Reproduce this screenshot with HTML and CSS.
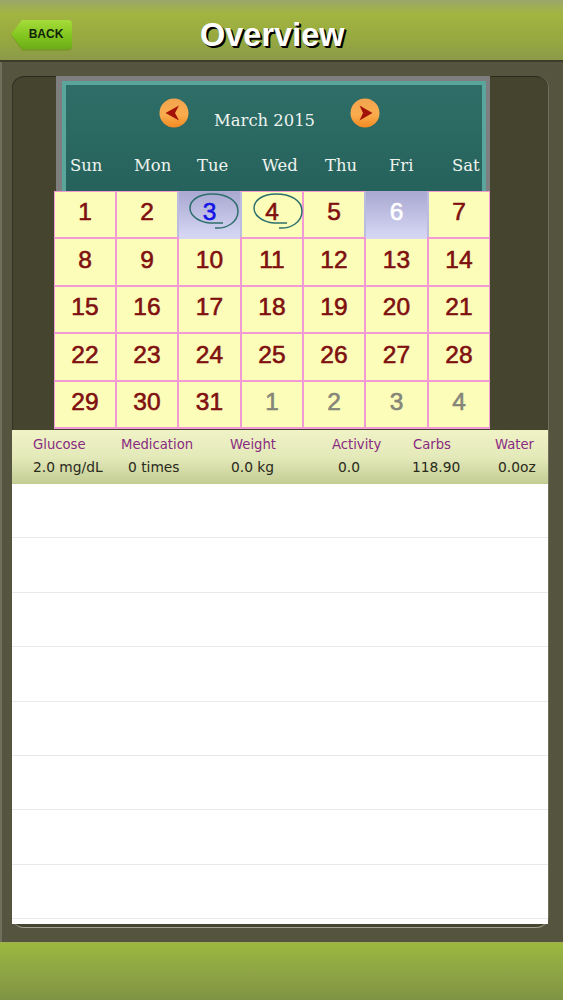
FILE: index.html
```html
<!DOCTYPE html>
<html lang="en">
<head>
<meta charset="utf-8">
<title>Overview</title>
<link rel="stylesheet" href="styles.css">
</head>
<body>
<div class="page">
  <header class="topbar">
    <a class="back">
      <svg class="back-shape" width="64" height="33" viewBox="0 0 64 33"><defs><linearGradient id="bk" x1="0" y1="0" x2="0" y2="1"><stop offset="0" stop-color="#a6dc3a"/><stop offset=".6" stop-color="#7fc31e"/><stop offset="1" stop-color="#6cac18"/></linearGradient></defs><path d="M1 15 L12 1 H58 Q62 1 62 5 V27 Q62 31 58 31 H12 Z" fill="#7d9a2c" transform="translate(0 1)"/><path d="M1 15 L12 1 H58 Q62 1 62 5 V26 Q62 30 58 30 H12 Z" fill="url(#bk)"/></svg>
      <span class="back-label">BACK</span>
    </a>
    <h1 class="title">Overview</h1>
  </header>
  <main class="stage">
    <section class="panel">
      <div class="calendar">
        <div class="cal-head">
          <div class="cal-inner">
            <div class="month-nav">
              <svg class="arrow" width="30" height="30" viewBox="0 0 30 30"><defs><linearGradient id="ar" x1="0" y1="0" x2="0" y2="1"><stop offset="0" stop-color="#f2a44e"/><stop offset=".55" stop-color="#f9ad4e"/><stop offset="1" stop-color="#f58a22"/></linearGradient></defs><circle cx="15" cy="15" r="14.5" fill="url(#ar)"/><path d="M6.5 15 L20 7.5 L16 15 L20 22.5 Z" fill="#a31208"/></svg>
              <span class="month">March 2015</span>
              <svg class="arrow" width="30" height="30" viewBox="0 0 30 30"><circle cx="15" cy="15" r="14.5" fill="url(#ar)"/><path d="M22.5 15 L9.5 7.5 L13 15 L9.5 22.5 Z" fill="#a31208"/></svg>
            </div>
            <div class="weekdays"><span>Sun</span><span>Mon</span><span>Tue</span><span>Wed</span><span>Thu</span><span>Fri</span><span>Sat</span></div>
          </div>
        </div>
        <div class="grid">
          <div class="cell">1</div><div class="cell">2</div>
          <div class="cell marked-day selected"><span class="blue">3</span><svg class="ring" width="56" height="42" viewBox="0 0 56 42"><path d="M30 37 C42 38 53 31 53 20 C53 9 41 3 27 3 C14 3 5 9 5 17 C5 25 14 31 25 32 H38" fill="none" stroke="#2d6f6c" stroke-width="1.5"/></svg></div>
          <div class="cell marked-day">4<svg class="ring" width="56" height="42" viewBox="0 0 56 42"><path d="M30 37 C42 38 53 31 53 20 C53 9 41 3 27 3 C14 3 5 9 5 17 C5 25 14 31 25 32 H38" fill="none" stroke="#2d6f6c" stroke-width="1.5"/></svg></div>
          <div class="cell">5</div><div class="cell today">6</div><div class="cell">7</div>
          <div class="cell">8</div><div class="cell">9</div><div class="cell">10</div><div class="cell">11</div><div class="cell">12</div><div class="cell">13</div><div class="cell">14</div>
          <div class="cell">15</div><div class="cell">16</div><div class="cell">17</div><div class="cell">18</div><div class="cell">19</div><div class="cell">20</div><div class="cell">21</div>
          <div class="cell">22</div><div class="cell">23</div><div class="cell">24</div><div class="cell">25</div><div class="cell">26</div><div class="cell">27</div><div class="cell">28</div>
          <div class="cell">29</div><div class="cell">30</div><div class="cell">31</div><div class="cell muted">1</div><div class="cell muted">2</div><div class="cell muted">3</div><div class="cell muted">4</div>
        </div>
      </div>
      <div class="summary">
        <div class="stat"><span class="label">Glucose</span><span class="value">2.0 mg/dL</span></div>
        <div class="stat"><span class="label">Medication</span><span class="value v-med">0 times</span></div>
        <div class="stat"><span class="label">Weight</span><span class="value v-wt">0.0 kg</span></div>
        <div class="stat"><span class="label">Activity</span><span class="value v-act">0.0</span></div>
        <div class="stat"><span class="label l-carb">Carbs</span><span class="value">118.90</span></div>
        <div class="stat"><span class="label">Water</span><span class="value v-wat">0.0oz</span></div>
      </div>
      <div class="list">
        <div class="row"></div><div class="row"></div><div class="row"></div><div class="row"></div>
        <div class="row"></div><div class="row"></div><div class="row"></div><div class="row"></div>
      </div>
    </section>
  </main>
  <footer class="bottombar"></footer>
</div>
</body>
</html>
```

FILE: styles.css
```css
* { box-sizing: border-box; }
html, body { margin: 0; padding: 0; }
body { background: #55553f; font-family: "Liberation Sans", Arial, sans-serif; }
.page { width: 563px; height: 1000px; display: flex; flex-direction: column; overflow: hidden; }

.topbar {
  height: 62px;
  flex: none;
  display: flex;
  align-items: flex-start;
  background: linear-gradient(#9aa76a 0, #a2b540 14px, #96a83f 40px, #8b9a49 60px);
  border-bottom: 2px solid #3c3c28;
  padding: 19px 0 0 10px;
}
.back { position: relative; width: 64px; height: 33px; display: flex; align-items: center; justify-content: center; padding: 0 0 3px 8px; }
.back-shape { position: absolute; left: 0; top: 0; }
.back-label { position: relative; font-size: 12px; font-weight: 700; color: #10240a; }
.title {
  margin: -5px 0 0 126px;
  font-size: 32.5px;
  line-height: 42px;
  font-weight: 700;
  color: #fff;
  text-shadow: 2px 2px 0 #000, 1px 1px 0 #000;
}

.stage {
  flex: 1;
  min-height: 0;
  display: flex;
  padding: 14px 15px 14px 10px;
  background: #55553f;
  border-left: 2px solid #6f6f5c;
}
.panel {
  flex: 1;
  display: flex;
  flex-direction: column;
  background: #44442f;
  border-radius: 12px;
  border-top: 1px solid #2a2a1c;
  border-bottom: 1px solid #a5a595;
  box-shadow: inset 1px 0 0 #33332a, 1px 0 0 #6f6f5c;
  padding-bottom: 3px;
}

.calendar { margin-left: 42px; width: 436px; flex: none; }
.cal-head { margin-left: 2px; background: #7e7e7e; padding: 5px 4px 0 6px; height: 115px; margin-top: -1px; }
.cal-inner {
  height: 110px;
  border: 4px solid #5aa59c;
  border-bottom: 0;
  background: linear-gradient(#2f6e68, #26625c);
  color: #eef3ee;
  font-family: "DejaVu Serif", "Liberation Serif", serif;
}
.month-nav { display: flex; align-items: flex-start; padding: 13px 0 0 93px; height: 71px; }
.arrow { flex: none; }
.month { width: 161px; padding: 13px 0 0 25px; font-size: 16.4px; line-height: 20px; white-space: nowrap; }
.weekdays { display: grid; grid-template-columns: 64px 63px 65px 63px 64px 63px 1fr; padding-left: 4px; font-size: 16.4px; line-height: 20px; }

.grid {
  display: grid;
  grid-template-columns: 60px 60px 61px 60px 60px 61px 60px;
  grid-template-rows: 45px 46px 45px 46px 45px;
  gap: 2px;
  padding: 1px 1px 2px 1px;
  background: #f29ad4;
}
.cell {
  position: relative;
  display: flex;
  align-items: center;
  justify-content: center;
  padding-bottom: 5px;
  background: #fdfdba;
  color: #7f1010;
  font-size: 24.5px;
  font-weight: 400;
  -webkit-text-stroke: .6px currentColor;
}
.selected, .today {
  background: linear-gradient(#a9a9d2, #d6d6f4);
  box-shadow: -2px 0 0 #bcbce0, 2px 0 0 #bcbce0, 0 2px 0 #d6d6f4, 0 -1px 0 #a9a9d2;
}
.today { color: #fff; }
.blue { color: #1414e6; }
.muted { color: #858578; }
.ring { position: absolute; left: 6px; top: -1px; }
.marked-day + .marked-day .ring { left: 7px; }

.summary {
  flex: none;
  margin-top: 1px;
  height: 54px;
  display: grid;
  grid-template-columns: 88px 109px 102px 80px 83px 1fr;
  padding: 7px 0 0 21px;
  background: linear-gradient(#eff3c6, #e4e9ba 50%, #c2cd92);
  font-family: "DejaVu Sans", Verdana, sans-serif;
  line-height: 16px;
}
.stat { display: flex; flex-direction: column; gap: 6px; white-space: nowrap; }
.label { color: #8a2a82; font-size: 13.2px; }
.value { color: #2a2a1c; font-size: 13.8px; }
.v-med { padding-left: 7px; }
.v-wt { padding-left: 1px; }
.v-act { padding-left: 6px; }
.l-carb { padding-left: 1px; }
.v-wat { padding-left: 3px; }

.list { flex: 1; min-height: 0; background: #fff; }
.row { height: 54.4px; border-bottom: 1px solid #e9e9e9; }

.bottombar { height: 58px; flex: none; background: linear-gradient(#9cb93e, #8ea545 50%, #7f9443); border-top: 1px solid #a3ad55; }
```
